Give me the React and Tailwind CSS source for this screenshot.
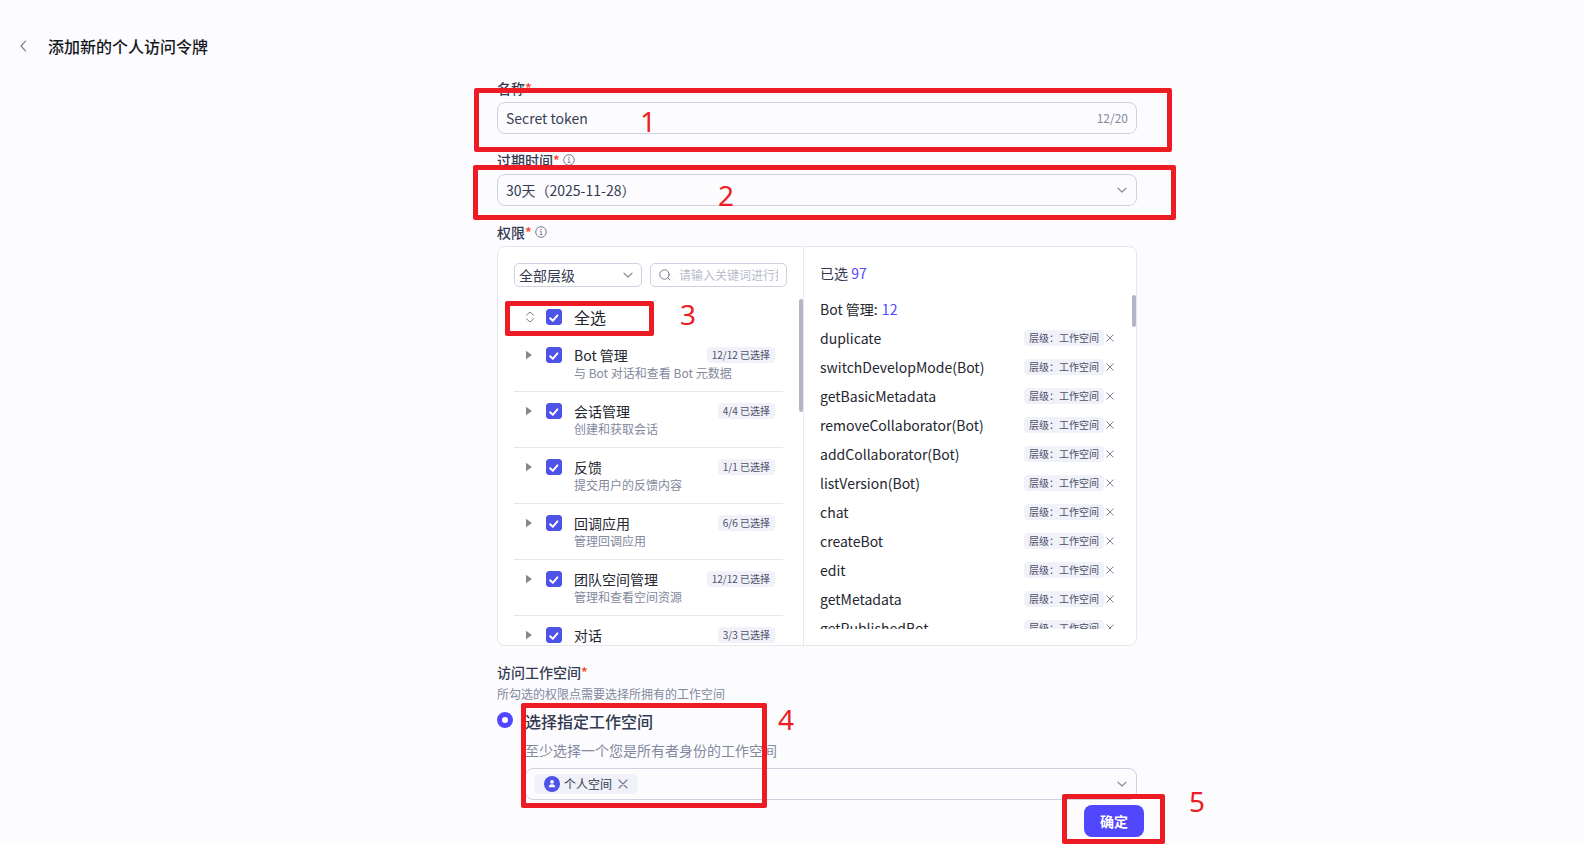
import { useState } from 'react'
import clsx from 'clsx'

const GROUPS = [
  { id: 'bot', name: 'Bot 管理', desc: '与 Bot 对话和查看 Bot 元数据', count: '12/12' },
  { id: 'conversation', name: '会话管理', desc: '创建和获取会话', count: '4/4' },
  { id: 'feedback', name: '反馈', desc: '提交用户的反馈内容', count: '1/1' },
  { id: 'callback', name: '回调应用', desc: '管理回调应用', count: '6/6' },
  { id: 'team', name: '团队空间管理', desc: '管理和查看空间资源', count: '12/12' },
  { id: 'chat', name: '对话', desc: '', count: '3/3' },
]

const BOT_PERMISSIONS = [
  'duplicate',
  'switchDevelopMode(Bot)',
  'getBasicMetadata',
  'removeCollaborator(Bot)',
  'addCollaborator(Bot)',
  'listVersion(Bot)',
  'chat',
  'createBot',
  'edit',
  'getMetadata',
  'getPublishedBot',
]

// Red frames and step numbers, placed relative to the form
const STEPS = [
  { n: 1, frame: '-left-[23px] top-[10px] w-[698px] h-[64px]', digit: 'left-[143px] top-[23px]' },
  { n: 2, frame: '-left-[24px] top-[87px] w-[703px] h-[55px]', digit: 'left-[221px] top-[97px]' },
  { n: 3, frame: 'left-[8px] top-[223px] w-[149px] h-[35px]', digit: 'left-[183px] top-[216px]' },
  { n: 4, frame: 'left-[24px] top-[625px] w-[246px] h-[105px]', digit: 'left-[281px] top-[621px]' },
  { n: 5, frame: 'left-[565px] top-[716px] w-[103px] h-[50px]', digit: 'left-[692px] top-[703px]' },
]

function Chevron({ className }) {
  return (
    <svg viewBox="0 0 12 12" className={clsx('size-3 pointer-events-none', className)} fill="none" stroke="#8b8d9b" strokeWidth="1.2" strokeLinecap="round" strokeLinejoin="round">
      <path d="M2 4.2l4 3.8 4-3.8" />
    </svg>
  )
}

function Cross({ className }) {
  return (
    <svg viewBox="0 0 10 10" className={className} fill="none" stroke="#777b90" strokeWidth="1.2" strokeLinecap="round">
      <path d="M1 1l8 8M9 1l-8 8" />
    </svg>
  )
}

function InfoIcon() {
  return (
    <svg viewBox="0 0 12 12" className="size-3 ml-[3px]" fill="none" stroke="#777b90">
      <circle cx="6" cy="6" r="5.3" strokeWidth="1" />
      <path d="M4.9 5.2h1.2v3.2M4.7 8.5h2.8" strokeWidth="0.9" />
      <circle cx="6" cy="3.4" r="0.7" fill="#777b90" stroke="none" />
    </svg>
  )
}

function FieldLabel({ htmlFor, info, className, children }) {
  return (
    <div className={clsx('flex items-center h-5 text-sm leading-5 font-medium text-[#343a50]', className)}>
      <label htmlFor={htmlFor}>{children}<span className="text-[#ff441e]">*</span></label>
      {info && <InfoIcon />}
    </div>
  )
}

function Checkbox({ id, defaultChecked }) {
  return (
    <span className="relative size-4 shrink-0">
      <input id={id} type="checkbox" defaultChecked={defaultChecked} className="peer block size-4 appearance-none rounded-[3px] border border-[#c9cbdc] checked:border-[#4d53e8] checked:bg-[#4d53e8]" />
      <svg viewBox="0 0 16 16" className="absolute inset-0 size-4 pointer-events-none hidden peer-checked:block" fill="none" stroke="#fff" strokeWidth="2" strokeLinecap="round" strokeLinejoin="round">
        <path d="M4.2 9.2l2.6 2.6L11.4 6.4" />
      </svg>
    </span>
  )
}

function Tag({ children }) {
  return (
    <span className="h-4 px-[5px] rounded bg-[#f1f1f9] text-[10px] leading-4 text-[#4b5068] whitespace-nowrap">
      {children}
    </span>
  )
}

function GroupRow({ group }) {
  return (
    <div className="flex items-start h-14 pt-[11px] pr-2 border-b border-[#e6e6ee]">
      <button type="button" aria-label={group.name} className="w-8 h-4 pl-3 flex items-center">
        <svg viewBox="0 0 6 10" className="w-[6px] h-[10px]" fill="#85868f">
          <path d="M0 0.8v8.4L6 5z" />
        </svg>
      </button>
      <Checkbox id={group.id} defaultChecked />
      <label htmlFor={group.id} className="-mt-[2px] ml-3 flex-1 min-w-0 whitespace-nowrap">
        <span className="block text-sm leading-5 text-[#23262f]">{group.name}</span>
        <span className="block text-xs leading-4 text-[#83889d]">{group.desc}</span>
      </label>
      <Tag>{group.count} 已选择</Tag>
    </div>
  )
}

function PermissionPanel() {
  return (
    <div className="flex h-[400px] rounded-lg border border-[#e6e6ee] bg-white overflow-hidden">
      {/* 可选权限 */}
      <div className="relative w-[306px] shrink-0 border-r border-[#e6e6ee] pt-4 pl-4">
        <div className="flex gap-2 pr-4">
          <div className="relative w-32 shrink-0">
            <select aria-label="层级" className="block w-full h-6 appearance-none rounded-[5px] border border-[#cfd0e0] pl-1 text-sm leading-5 text-[#343a50]">
              <option>全部层级</option>
            </select>
            <Chevron className="absolute right-2 top-[6px]" />
          </div>
          <div className="flex items-center flex-1 min-w-0 h-6 rounded-[5px] border border-[#cfd0e0] px-2">
            <svg viewBox="0 0 12 12" className="size-3 shrink-0" fill="none" stroke="#777b90" strokeWidth="1" strokeLinecap="round">
              <circle cx="5.5" cy="5.5" r="4.7" />
              <path d="M9 9l2 2" />
            </svg>
            <input type="text" aria-label="搜索" placeholder="请输入关键词进行搜索" className="ml-2 flex-1 min-w-0 text-xs leading-4 outline-none placeholder:text-[#b9bccb]" />
          </div>
        </div>
        <div className="mt-3 pr-5">
          <div className="flex items-center h-9 mb-px">
            <button type="button" aria-label="展开" className="w-8 pl-[11px]">
              <svg viewBox="0 0 10 12" className="w-[10px] h-3" fill="none" stroke="#777b90" strokeLinecap="round" strokeLinejoin="round">
                <path d="M1.5 4.2L5 1l3.5 3.2M1.5 7.8L5 11l3.5-3.2" />
              </svg>
            </button>
            <Checkbox id="all" defaultChecked />
            <label htmlFor="all" className="ml-3 text-base leading-6 text-[#23262f]">全选</label>
          </div>
          {GROUPS.map(g => <GroupRow key={g.id} group={g} />)}
        </div>
        <div className="absolute right-0 top-[52px] w-1 h-[113px] rounded-sm bg-[#b2b5c7]" />
      </div>

      {/* 已选权限 */}
      <div className="relative flex flex-col flex-1 min-w-0 py-4 pl-4">
        <p className="text-sm leading-5 text-[#343a50]">已选 <span className="text-[#5147ff]">97</span></p>
        <div className="mt-3 pr-[22px] flex-1 min-h-0 overflow-hidden">
          <p className="text-sm leading-7 text-[#23262f]">Bot 管理: <span className="ml-px text-[#5147ff]">12</span></p>
          <ul>
            {BOT_PERMISSIONS.map(p => (
              <li key={p} className="flex items-center h-[29px] text-sm text-[#23262f]">
                <span className="flex-1">{p}</span>
                <Tag>层级：工作空间</Tag>
                <button type="button" aria-label={`移除 ${p}`} className="ml-[2px]">
                  <Cross className="size-2" />
                </button>
              </li>
            ))}
          </ul>
        </div>
        <div className="absolute right-0 top-12 w-1 h-8 rounded-sm bg-[#b2b5c7]" />
      </div>
    </div>
  )
}

export default function App() {
  const [name, setName] = useState('Secret token')

  return (
    <div className="min-h-screen overflow-hidden bg-[#fcfcff] font-['Noto_Sans_CJK_SC',sans-serif]">
      <header className="flex items-center gap-4 pt-[34px] pl-4">
        <button type="button" aria-label="返回">
          <svg viewBox="0 0 16 16" className="size-4" fill="none" stroke="#777b90" strokeWidth="1.2" strokeLinecap="round" strokeLinejoin="round">
            <path d="M9.5 3.2L5 8l4.5 4.8" />
          </svg>
        </button>
        <h1 className="text-base leading-6 font-medium text-[#15171e]">添加新的个人访问令牌</h1>
      </header>

      <main className="mt-5 pl-[50px] pb-[7px]">
        <form className="relative w-full max-w-[640px] mx-auto" onSubmit={e => e.preventDefault()}>
          <FieldLabel htmlFor="name">名称</FieldLabel>
          <div className="mt-1 flex items-center h-8 rounded-lg border border-[#cfd0e0] px-2">
            <input id="name" type="text" maxLength={20} value={name} onChange={e => setName(e.target.value)} className="flex-1 min-w-0 text-sm leading-5 text-[#383e54] outline-none" />
            <span className="text-xs leading-4 text-[#83889d]">{name.length}/20</span>
          </div>

          <FieldLabel htmlFor="expire" info className="mt-4">过期时间</FieldLabel>
          <div className="relative mt-1">
            <select id="expire" className="block w-full h-8 appearance-none rounded-lg border border-[#cfd0e0] pl-2 text-sm leading-5 text-[#343a50]">
              <option>30天（2025-11-28）</option>
            </select>
            <Chevron className="absolute right-[9px] top-[10px]" />
          </div>

          <FieldLabel info htmlFor="all" className="mt-4 mb-1">权限</FieldLabel>
          <PermissionPanel />

          <FieldLabel htmlFor="space" className="mt-4">访问工作空间</FieldLabel>
          <p className="mt-1 text-xs leading-4 text-[#83889d]">所勾选的权限点需要选择所拥有的工作空间</p>
          <div className="mt-[6px] flex items-start gap-3">
            <input id="space" type="radio" name="space" defaultChecked className="mt-1 size-4 shrink-0 appearance-none rounded-full border border-[#c9cbdc] checked:border-[5px] checked:border-[#5147ff] bg-white" />
            <div className="flex-1">
              <label htmlFor="space" className="block pt-px text-base leading-6 font-medium text-[#343a50]">选择指定工作空间</label>
              <p className="mt-[7px] text-sm leading-5 text-[#83889d]">至少选择一个您是所有者身份的工作空间</p>
              <div className="mt-2 flex items-center h-8 rounded-lg border border-[#cfd0e0] px-2">
                <span className="flex items-center h-5 rounded-md bg-[#f1f1f9] px-[10px] text-xs leading-4 text-[#343a50]">
                  <svg viewBox="0 0 16 16" className="size-4 mr-1">
                    <circle cx="8" cy="8" r="8" fill="#4d53e8" />
                    <circle cx="8" cy="5.8" r="1.9" fill="#fff" />
                    <path d="M4.8 11.2c0-1.9 1.2-2.9 3.2-2.9s3.2 1 3.2 2.9z" fill="#fff" />
                  </svg>
                  个人空间
                  <button type="button" aria-label="移除个人空间" className="ml-[6px]">
                    <Cross className="size-[10px]" />
                  </button>
                </span>
                <button type="button" aria-label="选择工作空间" className="ml-auto">
                  <Chevron />
                </button>
              </div>
            </div>
          </div>

          <div className="mt-[5px] -mr-[7px] flex justify-end">
            <button type="submit" className="h-8 px-4 rounded-lg bg-[#5147ff] text-sm leading-5 font-bold text-white">确定</button>
          </div>

          {STEPS.map(s => (
            <div key={s.n}>
              <div className={clsx('absolute border-[5px] border-[#ed1c24] rounded-[2px] pointer-events-none', s.frame)} />
              <span className={clsx("absolute font-['Noto_Sans',sans-serif] text-[28px] leading-10 text-[#ed1c24] pointer-events-none", s.digit)}>{s.n}</span>
            </div>
          ))}
        </form>
      </main>
    </div>
  )
}
